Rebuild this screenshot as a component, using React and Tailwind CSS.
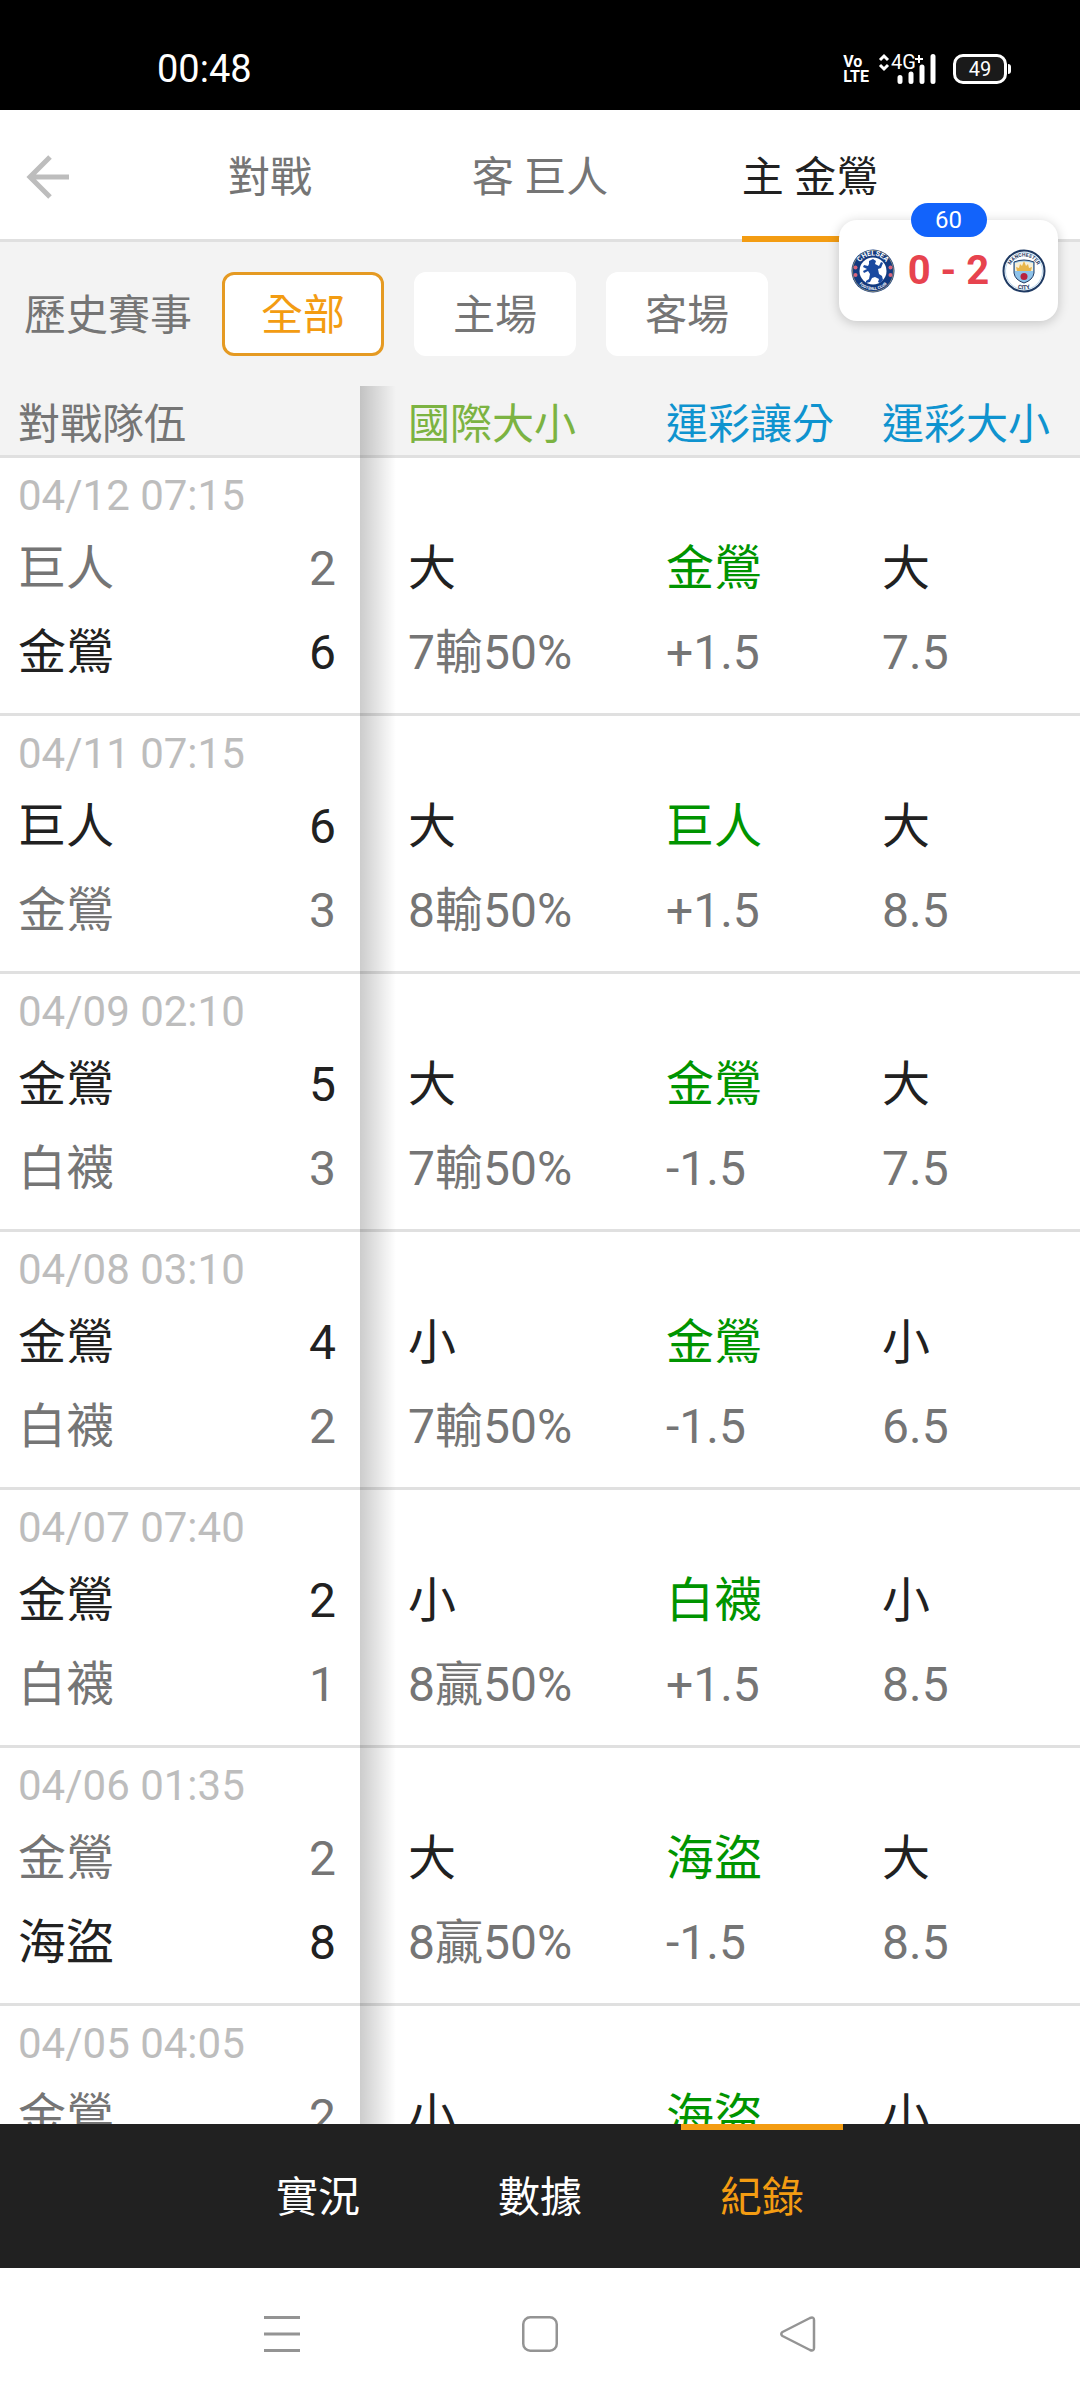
import { useState } from 'react';

const headerTabs = ['對戰', '客 巨人', '主 金鶯'];
const filters = ['全部', '主場', '客場'];
const bottomTabs = ['實況', '數據', '紀錄'];

const games = [
  { time: '04/12 07:15', away: ['巨人', 2], home: ['金鶯', 6], intl: ['大', '7輸50%'], spread: ['金鶯', '+1.5'], total: ['大', '7.5'] },
  { time: '04/11 07:15', away: ['巨人', 6], home: ['金鶯', 3], intl: ['大', '8輸50%'], spread: ['巨人', '+1.5'], total: ['大', '8.5'] },
  { time: '04/09 02:10', away: ['金鶯', 5], home: ['白襪', 3], intl: ['大', '7輸50%'], spread: ['金鶯', '-1.5'], total: ['大', '7.5'] },
  { time: '04/08 03:10', away: ['金鶯', 4], home: ['白襪', 2], intl: ['小', '7輸50%'], spread: ['金鶯', '-1.5'], total: ['小', '6.5'] },
  { time: '04/07 07:40', away: ['金鶯', 2], home: ['白襪', 1], intl: ['小', '8贏50%'], spread: ['白襪', '+1.5'], total: ['小', '8.5'] },
  { time: '04/06 01:35', away: ['金鶯', 2], home: ['海盜', 8], intl: ['大', '8贏50%'], spread: ['海盜', '-1.5'], total: ['大', '8.5'] },
  { time: '04/05 04:05', away: ['金鶯', 2], home: ['海盜', 3], intl: ['小', '8贏50%'], spread: ['海盜', '-1.5'], total: ['小', '8.5'] },
];

function StatusBar() {
  return (
    <div className="flex h-[110px] shrink-0 items-center justify-between bg-black pt-7 pr-[69px] pl-[157px] text-white">
      <span className="text-[38px] leading-none">00:48</span>
      <div className="flex items-center">
        <div className="flex flex-col font-['Liberation_Sans_Narrow',Roboto,sans-serif] text-[16px] leading-[15px] font-bold">
          <span>Vo</span>
          <span>LTE</span>
        </div>
        <svg className="ml-2 h-[30px] w-[60px] overflow-visible" viewBox="0 0 60 30" fill="none">
          <path d="M3 6l4-4 4 4M3 11l4 4 4-4" stroke="white" strokeWidth="3" />
          <text x="14" y="15" fill="white" fontSize="20">4G</text>
          <path d="M38 5h8M42 1v8" stroke="white" strokeWidth="2" />
          <path d="M23 23.5v4M34 20v7.5M45 13v14.5M56 2.5v25" stroke="white" strokeWidth="5" strokeLinecap="round" />
        </svg>
        <div className="ml-4 flex h-[30px] w-[54px] items-center justify-center rounded-[10px] border-3 border-white bg-[#1a1a1a] text-[20px] leading-none">
          49
        </div>
        <div className="ml-px h-[10px] w-[3px] rounded-r-sm bg-white" />
      </div>
    </div>
  );
}

function Header({ active, onChange }) {
  return (
    <header className="relative flex h-[132px] shrink-0 justify-center border-b-3 border-[#e0e0e0] bg-white">
      <button aria-label="返回" className="absolute inset-y-0 left-0 flex items-center pt-1 pl-6">
        <svg className="h-12 w-12" viewBox="0 0 48 48" fill="none" stroke="#bdbdbd" strokeWidth="5">
          <path d="M45 24H7M26 4L6 24l20 20" />
        </svg>
      </button>
      <nav className="-mb-[3px] grid w-3/4 grid-cols-3">
        {headerTabs.map((tab, i) => (
          <button key={tab} onClick={() => onChange(i)} className="flex justify-center text-[42px]">
            <span
              className={`flex h-full items-center border-b-6 pt-2 ${i === active ? 'border-[#f39c12] text-[#212121]' : 'border-transparent text-[#757575]'}`}
            >
              {tab}
            </span>
          </button>
        ))}
      </nav>
    </header>
  );
}

function ChelseaCrest() {
  return (
    <svg className="h-11 w-11" viewBox="0 0 44 44">
      <circle cx="22" cy="22" r="21.5" fill="#123a80" />
      <circle cx="22" cy="22" r="20.5" fill="none" stroke="#c9b77a" strokeWidth="0.6" />
      <circle cx="22" cy="22" r="13.5" fill="white" />
      <path id="chelsea-top" d="M6.5 22a15.5 15.5 0 0 1 31 0" fill="none" />
      <path id="chelsea-bottom" d="M3 22a19 19 0 0 0 38 0" fill="none" />
      <text fill="white" fontSize="7" fontWeight="700" textAnchor="middle">
        <textPath href="#chelsea-top" startOffset="50%">CHELSEA</textPath>
      </text>
      <text fill="white" fontSize="4" fontWeight="700" textAnchor="middle">
        <textPath href="#chelsea-bottom" startOffset="50%">FOOTBALL CLUB</textPath>
      </text>
      <g fill="#d9657a">
        <circle cx="4.5" cy="18.5" r="2" />
        <circle cx="4.5" cy="26" r="2" />
        <circle cx="39.5" cy="18.5" r="2" />
        <circle cx="39.5" cy="26" r="2" />
      </g>
      <path
        d="M18 12l4-2 3 2-1 3 4 2 2-4 2 1-2 5-3 1 1 5 3 2 1 4-3 3-2-1 1-3-4-2-3 1-2 4-4 1v-2l3-2 1-5-2-3-4 2-1-2 4-2-4-2 1-2 4 1 1-2z"
        fill="#1b4aa0"
      />
    </svg>
  );
}

function CityCrest() {
  return (
    <svg className="h-11 w-11" viewBox="0 0 44 44">
      <circle cx="22" cy="22" r="20.5" fill="white" stroke="#1f3a63" strokeWidth="2" />
      <circle cx="22" cy="22" r="18.5" fill="none" stroke="#a9cbe6" strokeWidth="0.8" />
      <path id="city-top" d="M7.5 22a14.5 14.5 0 0 1 29 0" fill="none" />
      <path id="city-bottom" d="M3.5 22a18.5 18.5 0 0 0 37 0" fill="none" />
      <text fill="#1f3a63" fontSize="5" fontWeight="700" textAnchor="middle">
        <textPath href="#city-top" startOffset="50%">MANCHESTER</textPath>
      </text>
      <text fill="#1f3a63" fontSize="6" fontWeight="700" textAnchor="middle">
        <textPath href="#city-bottom" startOffset="50%">CITY</textPath>
      </text>
      <path d="M12 13q10-4 20 0v11q-1 7-10 10-9-3-10-10z" fill="#8fc3ea" stroke="#1f3a63" strokeWidth="1" />
      <path d="M13 14q9-3 18 0v8H13z" fill="#f6efd8" />
      <path d="M15 22l-1-4 3 1 1-4 2 2 2-5 2 5 2-2 1 4 3-1-1 4z" fill="#e8b64a" />
      <circle cx="22" cy="27.5" r="3.5" fill="#b8233f" />
    </svg>
  );
}

function ScoreWidget() {
  return (
    <aside className="absolute top-[220px] right-[22px] z-20 flex h-[101px] w-[219px] items-center justify-between rounded-[18px] bg-white px-3 shadow-[0_2px_12px_rgba(0,0,0,0.2)]">
      <span className="absolute -top-[17px] left-1/2 flex h-[34px] w-[76px] -translate-x-1/2 items-center justify-center rounded-full bg-[#1263fb] text-[24px] leading-none text-white">
        60
      </span>
      <ChelseaCrest />
      <span className="text-[40px] leading-none font-bold text-[#e7434e]">0 - 2</span>
      <CityCrest />
    </aside>
  );
}

function FilterBar({ active, onChange }) {
  return (
    <div className="flex h-[144px] shrink-0 items-center gap-[30px] bg-[#f3f3f3] pl-6 text-[42px] leading-none text-[#757575]">
      <span className="pt-1">歷史賽事</span>
      {filters.map((filter, i) => (
        <button
          key={filter}
          onClick={() => onChange(i)}
          className={`h-[84px] w-[162px] rounded-xl border-3 bg-white pt-1 ${i === active ? 'border-[#e59a22] text-[#f39c12]' : 'border-white'}`}
        >
          {filter}
        </button>
      ))}
    </div>
  );
}

function TeamLine({ team, won }) {
  const [name, score] = team;
  return (
    <div className={`flex h-[84px] items-center justify-between ${won ? 'text-[#212121]' : 'text-[#757575]'}`}>
      <span>{name}</span>
      <span>{score}</span>
    </div>
  );
}

function OddsCell({ value, tone }) {
  const [result, line] = value;
  return (
    <td className="pb-[18px] pl-12 align-bottom whitespace-nowrap">
      <div className={`flex h-[84px] items-center ${tone}`}>{result}</div>
      <div className="flex h-[84px] items-center text-[#757575]">{line}</div>
    </td>
  );
}

function ColumnShadow() {
  return <div className="absolute top-0 -bottom-[3px] left-full w-9 bg-linear-to-r from-black/20 to-transparent" />;
}

function RecordTable() {
  return (
    <table className="w-full table-fixed border-separate border-spacing-0 text-left">
      <thead className="bg-[#f3f3f3] text-[42px]">
        <tr className="h-[72px] *:border-b-3 *:border-[#e0e0e0] *:p-0 *:pt-2 *:leading-[61px] *:font-normal *:whitespace-nowrap">
          <th className="relative w-1/3 text-[#757575]">
            <span className="pl-[18px]">對戰隊伍</span>
            <ColumnShadow />
          </th>
          <th className="w-[258px] text-[#7cb342]"><span className="pl-12">國際大小</span></th>
          <th className="w-1/5 text-[#0f93cf]"><span className="pl-12">運彩讓分</span></th>
          <th className="text-[#0f93cf]"><span className="pl-12">運彩大小</span></th>
        </tr>
      </thead>
      <tbody className="bg-white text-[48px] leading-none">
        {games.map((game) => (
          <tr key={game.time} className="*:border-b-3 *:border-[#e0e0e0]">
            <td className="relative pt-3 pr-6 pb-[18px] pl-[18px]">
              <div className="mb-[6px] flex h-[51px] items-center text-[42px] text-[#bdbdbd]">{game.time}</div>
              <TeamLine team={game.away} won={game.away[1] > game.home[1]} />
              <TeamLine team={game.home} won={game.home[1] > game.away[1]} />
              <ColumnShadow />
            </td>
            <OddsCell value={game.intl} tone="text-[#212121]" />
            <OddsCell value={game.spread} tone="text-[#009400]" />
            <OddsCell value={game.total} tone="text-[#212121]" />
          </tr>
        ))}
      </tbody>
    </table>
  );
}

function BottomTabs({ active, onChange }) {
  return (
    <nav className="flex h-[144px] shrink-0 justify-center gap-[60px] bg-[#212121] text-[42px]">
      {bottomTabs.map((tab, i) => (
        <button
          key={tab}
          onClick={() => onChange(i)}
          className={`w-[162px] border-t-6 pb-1 ${i === active ? 'border-[#f39c12] text-[#f39c12]' : 'border-transparent text-white'}`}
        >
          {tab}
        </button>
      ))}
    </nav>
  );
}

function SystemNav() {
  return (
    <div className="flex h-[132px] shrink-0 items-center justify-center gap-[222px] bg-white">
      <button aria-label="選單">
        <svg className="h-9 w-9" viewBox="0 0 36 36" fill="none" stroke="#949494" strokeWidth="3">
          <path d="M0 1.5h36M0 18h36M0 34.5h36" />
        </svg>
      </button>
      <button aria-label="主畫面">
        <svg className="h-9 w-9" viewBox="0 0 36 36" fill="none" stroke="#949494" strokeWidth="2.5">
          <rect x="1.25" y="1.25" width="33.5" height="33.5" rx="7" />
        </svg>
      </button>
      <button aria-label="上一頁">
        <svg className="h-9 w-9" viewBox="0 0 36 36" fill="none" stroke="#949494" strokeWidth="2.5" strokeLinejoin="round">
          <path d="M2.5 16Q0 18 2.5 20L30 34Q34 35.5 34 32V4Q34 .5 30 2Z" />
        </svg>
      </button>
    </div>
  );
}

export default function App() {
  const [headerTab, setHeaderTab] = useState(2);
  const [filter, setFilter] = useState(0);
  const [bottomTab, setBottomTab] = useState(2);

  return (
    <div className="relative flex h-screen flex-col overflow-hidden bg-white font-[Roboto,'Noto_Sans_CJK_TC',sans-serif]">
      <StatusBar />
      <Header active={headerTab} onChange={setHeaderTab} />
      <FilterBar active={filter} onChange={setFilter} />
      <main className="min-h-0 flex-1 overflow-x-hidden overflow-y-auto [scrollbar-width:none]">
        <RecordTable />
      </main>
      <BottomTabs active={bottomTab} onChange={setBottomTab} />
      <SystemNav />
      <ScoreWidget />
    </div>
  );
}
